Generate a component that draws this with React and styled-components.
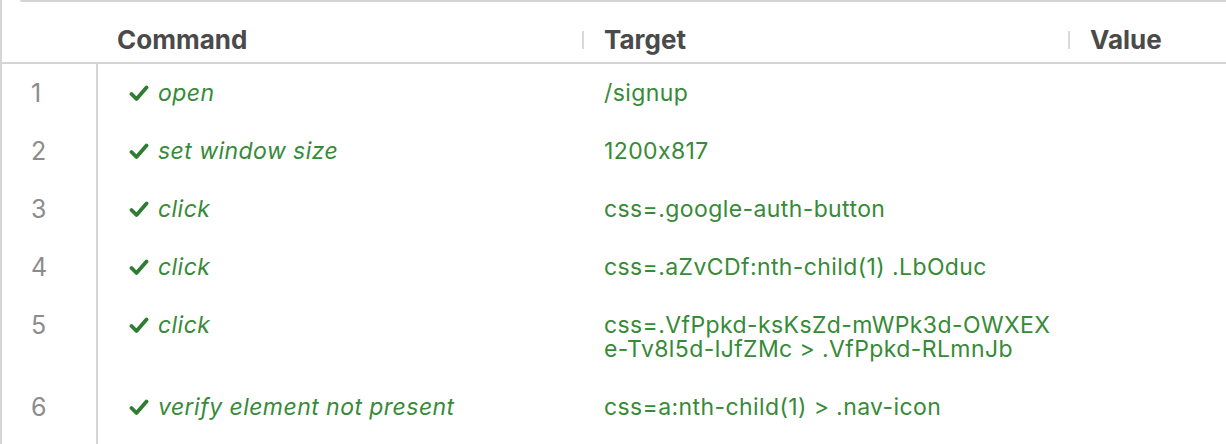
import React from "react";
import styled, { createGlobalStyle } from "styled-components";

const GlobalStyle = createGlobalStyle`
  html, body {
    margin: 0;
    padding: 0;
    background: #ffffff;
  }
  body {
    font-family: Inter, "Liberation Sans", sans-serif;
    font-feature-settings: "calt" 0;
  }
`;

const LINE = "#d5d5d5";
const GREEN = "#378a37";

const COLUMNS = "96px 484px 486px 1fr";

const Panel = styled.div`
  width: 1226px;
  height: 444px;
  box-sizing: border-box;
  border-left: 2px solid ${LINE};
  overflow: hidden;
  display: flex;
  flex-direction: column;
`;

const TopEdge = styled.div`
  flex: none;
  height: 2px;
  margin-left: 18px;
  background: ${LINE};
  border-bottom-left-radius: 2px;
`;

const HeaderRow = styled.div`
  flex: none;
  display: grid;
  grid-template-columns: ${COLUMNS};
  height: 62px;
  box-sizing: border-box;
  padding-top: 23px;
  border-bottom: 2px solid ${LINE};
`;

const HeaderCell = styled.div`
  display: flex;
  align-items: center;
  height: 30px;
  padding-left: ${(p) => p.$pad || 0}px;
  font-size: 26px;
  font-weight: 700;
  color: #4a4a4a;
  line-height: 30px;
`;

const Divider = styled.span`
  width: 2px;
  height: 18px;
  background: #d9d9d9;
  margin-right: 20px;
`;

const Body = styled.div`
  flex: 1;
  display: flex;
  flex-direction: column;
`;

const Row = styled.div`
  flex: none;
  display: grid;
  grid-template-columns: ${COLUMNS};

  &:last-child {
    flex: 1 0 auto;
  }
`;

const NumCell = styled.div`
  border-right: 2px solid ${LINE};
  padding: 17px 0 17px 29px;
  font-size: 25px;
  line-height: 24px;
  color: #8c8c8c;
`;

const CommandCell = styled.div`
  display: flex;
  align-items: flex-start;
  gap: 9px;
  padding: 17px 0 17px 31px;
  font-size: 23px;
  letter-spacing: 0.45px;
  line-height: 24px;
  font-style: italic;
  color: ${GREEN};
`;

const Check = styled.svg`
  flex: none;
  margin-top: 4px;
`;

const TargetCell = styled.div`
  padding: 17px 0 17px 22px;
  font-size: 23px;
  letter-spacing: 0.4px;
  line-height: 24px;
  color: ${GREEN};
  white-space: pre;
`;

const ValueCell = styled.div``;

const steps = [
  { command: "open", target: "/signup" },
  { command: "set window size", target: "1200x817" },
  { command: "click", target: "css=.google-auth-button" },
  { command: "click", target: "css=.aZvCDf:nth-child(1) .LbOduc" },
  {
    command: "click",
    target: "css=.VfPpkd-ksKsZd-mWPk3d-OWXEX\ne-Tv8l5d-lJfZMc > .VfPpkd-RLmnJb",
  },
  { command: "verify element not present", target: "css=a:nth-child(1) > .nav-icon" },
];

const CheckIcon = () => (
  <Check width="20" height="17" viewBox="0 0 20 17">
    <polyline
      points="2.5,9 7.5,14 17.5,2.5"
      fill="none"
      stroke="#2f7d32"
      strokeWidth="3.8"
      strokeLinecap="round"
      strokeLinejoin="round"
    />
  </Check>
);

const App = () => {
  return (
    <Panel>
      <GlobalStyle />
      <TopEdge />
      <HeaderRow>
        <HeaderCell />
        <HeaderCell $pad={19}>Command</HeaderCell>
        <HeaderCell>
          <Divider />
          Target
        </HeaderCell>
        <HeaderCell>
          <Divider />
          Value
        </HeaderCell>
      </HeaderRow>
      <Body>
        {steps.map((step, i) => (
          <Row key={i}>
            <NumCell>{i + 1}</NumCell>
            <CommandCell>
              <CheckIcon />
              {step.command}
            </CommandCell>
            <TargetCell>{step.target}</TargetCell>
            <ValueCell />
          </Row>
        ))}
      </Body>
    </Panel>
  );
};

export default App;
